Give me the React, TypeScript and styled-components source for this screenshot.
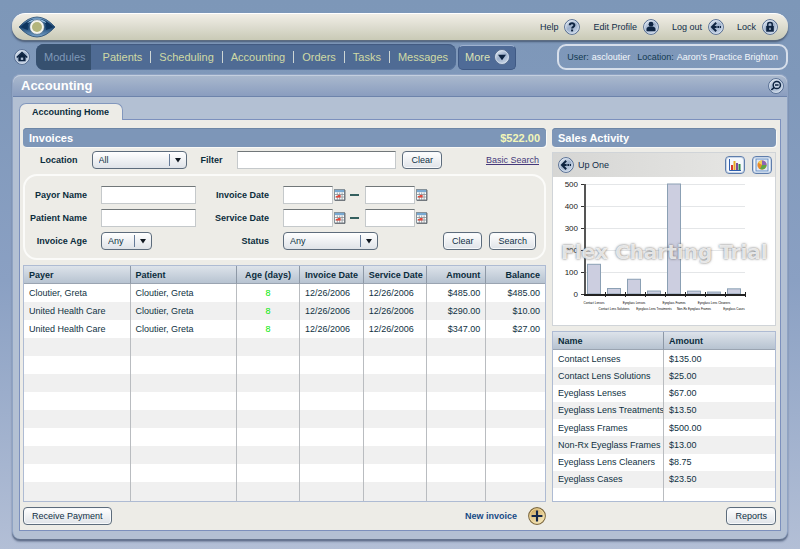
import React from "react";
import styled, { createGlobalStyle } from "styled-components";

const GlobalStyle = createGlobalStyle`
  * { box-sizing: border-box; }
  body {
    margin: 0;
    color: #0f3142;
    font-family: "Liberation Sans", Arial, sans-serif;
    font-size: 9px;
    line-height: 12px;
    background: #b3bfd6;
  }
  button, input, select { font: inherit; color: inherit; margin: 0; }
`;

const Page = styled.div`
  min-height: 100vh;
  padding: 13px 12px 11px;
  background: linear-gradient(#7d97b8 0, #7f98ba 80px, #8aa0c3 280px, #b3bfd6 100%);
`;

const TopBar = styled.header`
  display: flex;
  align-items: center;
  justify-content: space-between;
  height: 27px;
  padding: 0 10px 1px 6px;
  border-top: 1px solid #fff;
  border-radius: 13px;
  background: linear-gradient(#f1eee6, #dddccf 50%, #c9cab6);
  box-shadow: 0 1px 0 #5d6c80, 0 2px 2px #495b76;
`;

const UtilityList = styled.div`
  display: flex;
  align-items: center;
  gap: 13px;
`;

const UtilityButton = styled.button`
  display: flex;
  align-items: center;
  gap: 6px;
  padding: 0;
  border: 0;
  background: none;
  color: #112d48;
`;

const NavRow = styled.div`
  display: flex;
  align-items: center;
  height: 26px;
  margin: 4px 0;
  padding-left: 2px;
`;

const IconButton = styled.button`
  display: flex;
  padding: 0;
  border: 0;
  background: none;
`;

const Nav = styled.nav`
  display: flex;
  align-items: stretch;
  height: 26px;
  margin: 0 2px 0 6px;
  overflow: hidden;
  border-radius: 8px;
  background: #4f6b94;
  box-shadow: inset 0 1px 1px #425a80, inset 0 -1px 0 #5c77a0;
  font-size: 11px;
`;

const ModulesLabel = styled.span`
  display: flex;
  align-items: center;
  padding: 0 5px 1px 8px;
  margin-right: 4px;
  background: #36506f;
  color: #7f98b8;
`;

const NavLink = styled.a`
  display: flex;
  align-items: center;
  color: #cfdaa5;
  text-decoration: none;
  padding: 0 8px 1px;

  & + &::before {
    content: "";
    width: 1px;
    height: 12px;
    margin: 0 8px 0 -8px;
    background: #cdd6d5;
  }
`;

const MoreButton = styled.button`
  display: flex;
  align-items: center;
  gap: 4px;
  height: 25px;
  padding: 0 5px 0 6px;
  border: 1px solid #3f5984;
  border-top-color: #9fb2cf;
  border-radius: 5px;
  background: #4f6b97;
  color: #dbe1b4;
  font-size: 11px;
`;

const UserBox = styled.div`
  display: flex;
  align-items: center;
  gap: 3px;
  height: 26px;
  margin-left: auto;
  padding: 0 8px;
  border: 2px solid #d7dfeb;
  border-radius: 9px;
  color: #12384f;

  b { font-weight: 400; color: #f4f7fb; }
  b + span { margin-left: 4px; }
`;

const Panel = styled.section`
  padding-bottom: 8px;
  border: 1px solid #8fa3c3;
  border-bottom: 0;
  border-radius: 8px;
  background: #b3c0d3;
  box-shadow: 0 2px 1px #65748f, 0 3px 2px #8390aa;
`;

const PanelHeader = styled.header`
  display: flex;
  align-items: center;
  justify-content: space-between;
  height: 22px;
  padding: 0 3px 0 8px;
  border-top: 1px solid #c4cfdf;
  border-bottom: 1px solid #6d83ab;
  border-radius: 8px 8px 0 0;
  background: linear-gradient(#a9b8cd, #8a9dbf);

  h1 {
    margin: 0;
    padding-bottom: 1px;
    color: #fff;
    font-size: 13px;
  }
`;

const TabStrip = styled.div`
  display: flex;
  height: 22px;
  padding: 6px 6px 0;
`;

const Tab = styled.button`
  position: relative;
  height: 17px;
  padding: 0 13px 0 12px;
  border: 1px solid #8297bd;
  border-bottom: 0;
  border-radius: 7px 7px 0 0;
  background: #edece7;
  font-weight: 700;
  color: #0b2c3c;
`;

const Workspace = styled.main`
  display: grid;
  grid-template-columns: 523fr 224fr;
  column-gap: 6px;
  margin: 0 6px;
  padding: 8px 4px 0 3px;
  border: 1px solid #7c90bd;
  background: #edece7;
`;

const Column = styled.div`
  display: flex;
  flex-direction: column;
  min-width: 0;
`;

const SectionTitle = styled.h2`
  display: flex;
  align-items: center;
  justify-content: space-between;
  height: 19px;
  margin: 0;
  padding: 0 6px;
  border-radius: 4px;
  background: #7d96b8;
  box-shadow: inset 0 1px 0 #6d86a6, 1px 1px 0 #f9f9f6;
  color: #fff;
  font-size: 11px;

  strong { color: #f3f6b8; }
`;

const FilterRow = styled.div`
  display: flex;
  align-items: center;
  margin: 4px 0 5px;
  padding: 0 7px 0 17px;
`;

const FieldLabel = styled.label`
  color: #0b2c3c;
  font-weight: 700;
  text-align: right;
`;

const TextInput = styled.input<{ $width?: number }>`
  width: ${(p) => (p.$width ? `${p.$width}px` : "100%")};
  min-width: 0;
  height: 18px;
  padding: 0 4px;
  border: 1px solid #c5c9cb;
  border-top-color: #717779;
  border-radius: 0;
  background: #fff;
`;

const FilterInput = styled(TextInput)`
  flex: 1;
  margin: 0 6px 0 14px;
`;

const Button = styled.button`
  height: 18px;
  padding: 0 8px;
  border: 1px solid #5d6c7c;
  border-radius: 4px;
  background: linear-gradient(#fff, #dfe3e8);
  box-shadow: inset 0 0 0 1px #f7f9fb;
  color: #102f45;
  white-space: nowrap;
`;

const SelectShell = styled.span<{ $width: number }>`
  display: grid;
  align-items: center;
  width: ${(p) => p.$width}px;

  > * { grid-area: 1 / 1; }
  > svg { justify-self: end; pointer-events: none; }
`;

const SelectBox = styled.select<{ $indent: number }>`
  appearance: none;
  width: 100%;
  height: 18px;
  padding: 0 18px 1px ${(p) => p.$indent}px;
  border: 1px solid #5d6c7c;
  border-radius: 4px;
  background: linear-gradient(#fff, #dfe3e8);
`;

const BasicLink = styled.a`
  margin-left: 44px;
  color: #46397a;
  white-space: nowrap;
`;

const SearchBox = styled.form`
  display: grid;
  grid-template-columns: 62px 95px 59px 1fr;
  align-items: center;
  gap: 5px 14px;
  padding: 10px 8px 8px 0;
  border: 2px solid #fbfbf9;
  border-radius: 14px;
`;

const Inline = styled.div`
  display: flex;
  align-items: center;
  gap: 7px;
`;

const DateRange = styled.div`
  display: flex;
  align-items: center;
  gap: 1px;
`;

const Dash = styled.span`
  width: 9px;
  height: 2px;
  margin: 0 5px 0 3px;
  background: #35605f;
`;

const Spacer = styled.span`
  flex: 1;
`;

const Table = styled.table<{ $height: number }>`
  width: 100%;
  height: ${(p) => p.$height}px;
  table-layout: fixed;
  border-collapse: separate;
  border-spacing: 0;
  border: 1px solid #aebbd3;
  background: #fff;

  th, td {
    padding: 0 5px;
    border-right: 1px solid #b9bcc0;
    text-align: left;
    white-space: nowrap;
    overflow: hidden;
  }
  th:last-child, td:last-child { border-right: 0; }
  thead tr { height: 18px; }
  th {
    border-bottom: 1px solid #9aa4b1;
    border-right-color: #8d98a6;
    background: linear-gradient(#dde3ea, #b7c3d1);
    color: #0b2c3c;
  }
  tbody tr:nth-child(even) td { background: #f0f0f0; }
`;

const InvoiceTable = styled(Table)`
  margin-top: 5px;
  tbody tr { height: 18px; }
  tbody tr:last-child { height: auto; }
  th:nth-child(3), td:nth-child(3) { text-align: center; }
  td:nth-child(3) { color: #00e800; }
  th:nth-child(n + 6), td:nth-child(n + 6) { text-align: right; }
`;

const SalesTable = styled(Table)`
  margin-top: 5px;
  td, th { padding-right: 0; }
  tbody tr:last-child { height: 13px; }
`;

const Footer = styled.footer`
  display: flex;
  align-items: center;
  justify-content: space-between;
  height: 28px;
`;

const NewInvoice = styled.button`
  display: flex;
  align-items: center;
  gap: 11px;
  padding: 0;
  border: 0;
  background: none;
  color: #174a86;
  font-weight: 700;
`;

const ChartCard = styled.div`
  position: relative;
  margin-top: 5px;
  border: 1px solid #d0d4d8;
  background: #fff;
`;

const ChartBar = styled.div`
  display: flex;
  align-items: center;
  gap: 7px;
  height: 24px;
  padding: 0 3px 0 5px;
  background: linear-gradient(90deg, #d6d6d4, #e8e8e6);
`;

const UpButton = styled(UtilityButton)`
  gap: 4px;
  margin-right: auto;
`;

const ChartToggle = styled.button`
  display: grid;
  place-items: center;
  width: 20px;
  height: 18px;
  padding: 0;
  border: 1px solid #5e7dab;
  border-radius: 4px;
  background: #f5f8fc;
  box-shadow: inset 0 0 0 1px #c7d5e8;
`;

const ChartSvg = styled.svg`
  display: block;
  width: 100%;
`;

const Watermark = styled.span`
  position: absolute;
  top: 87px;
  left: 8px;
  color: rgba(255, 255, 255, 0.8);
  font: 700 20px/24px "DejaVu Sans", Verdana, sans-serif;
  text-shadow: 0 0 2px rgba(90, 90, 90, 0.7), 0 0 3px rgba(130, 130, 130, 0.5);
  white-space: nowrap;
  pointer-events: none;
`;

function Orb({ size = 16, gold = false, children }: { size?: number; gold?: boolean; children: React.ReactNode }) {
  const id = gold ? "orb-gold" : "orb-blue";
  return (
    <svg width={size} height={size} viewBox="0 0 16 16" aria-hidden="true">
      <defs>
        <linearGradient id={id} x1="0" y1="0" x2="0.6" y2="1">
          <stop offset="0" stopColor={gold ? "#c79c4a" : "#f2f6fb"} />
          <stop offset="0.55" stopColor={gold ? "#e2c88c" : "#9db0cb"} />
          <stop offset="1" stopColor={gold ? "#f6e8be" : "#c5d2e4"} />
        </linearGradient>
      </defs>
      <circle cx="8" cy="8" r="7.4" fill={`url(#${id})`} stroke={gold ? "#7c6840" : "#536b90"} strokeWidth="1" />
      <circle cx="8" cy="8" r="6.4" fill="none" stroke={gold ? "#f1dca4" : "#e3ebf5"} strokeWidth="0.7" />
      {children}
    </svg>
  );
}

const INK = "#0d2340";

const HelpGlyph = () => (
  <g>
    <path d="M5.7 6.3C5.7 3.6 10.4 3.5 10.4 6.3C10.4 7.9 8.1 7.8 8.1 9.6" fill="none" stroke={INK} strokeWidth="2" />
    <rect x="7.1" y="10.5" width="2" height="1.9" fill={INK} />
  </g>
);
const PersonGlyph = () => (
  <g fill={INK}>
    <circle cx="8" cy="5.2" r="2.4" />
    <path d="M3.5 12.2V9.7Q3.5 8 6 7.4H10Q12.5 8 12.5 9.7V12.2Z" />
  </g>
);
const BackGlyph = () => (
  <g fill="none" stroke={INK} strokeWidth="2">
    <path d="M8.2 3.8L4 8L8.2 12.2" />
    <path d="M5 8H8.6M9.4 8H11M11.7 8H13" />
  </g>
);
const LockGlyph = () => (
  <g>
    <rect x="4.2" y="6.9" width="7.6" height="5.8" fill={INK} />
    <path d="M5.8 7V5.2Q5.8 3.6 8 3.6Q10.2 3.6 10.2 5.2V7" fill="none" stroke={INK} strokeWidth="1.5" />
    <path d="M8 8.7V11" stroke="#c7d4e6" strokeWidth="1.2" />
  </g>
);
const HomeGlyph = () => (
  <g>
    <path d="M2.8 8.5L8 3.5L13.2 8.5" fill="none" stroke={INK} strokeWidth="1.6" />
    <path d="M4.4 7.6L8 4.2L11.6 7.6V12.2H4.4Z" fill={INK} />
    <rect x="6.8" y="8.6" width="2.4" height="2.3" fill="#aebed5" />
  </g>
);

function EyeLogo() {
  return (
    <svg width="38" height="22" viewBox="0 0 38 22" role="img" aria-label="Eye logo">
      <defs>
        <linearGradient id="eye-lid" x1="0" y1="0" x2="0" y2="1">
          <stop offset="0" stopColor="#7fa9cf" />
          <stop offset="0.5" stopColor="#17426f" />
          <stop offset="1" stopColor="#7da8cf" />
        </linearGradient>
      </defs>
      <path d="M1 11Q10 1 19 1Q28 1 37 11Q28 21 19 21Q10 21 1 11Z" fill="url(#eye-lid)" stroke="#24496e" strokeWidth="0.8" />
      <path d="M3 11Q10 3 17 3Q8 7 10 14Q6 13 3 11Z" fill="#0e355f" />
      <path d="M35 11Q28 3 21 3Q30 7 28 14Q32 13 35 11Z" fill="#0e355f" />
      <path d="M9 7Q13 3 19 3Q25 3 29 7Q24 5 19 5Q14 5 9 7Z" fill="#9bc2e2" />
      <circle cx="19" cy="11" r="7.4" fill="#f4f4ee" stroke="#3c5f80" strokeWidth="0.7" />
      <circle cx="19" cy="11" r="5" fill="#b3b57c" />
    </svg>
  );
}

const Calendar = () => (
  <svg width="12" height="12" viewBox="0 0 12 12" aria-hidden="true">
    <rect x="0.5" y="0.5" width="10" height="10.5" fill="#fff" stroke="#87929a" />
    <rect x="1" y="1" width="9" height="2.2" fill="#78a9d2" />
    <path d="M1 5.5H10.5M1 8H10.5M3.3 3.5V11M5.7 3.5V11M8.1 3.5V11" stroke="#8a8f94" strokeWidth="0.8" />
    <path d="M4 6H6.6V8.4H2V7H4Z" fill="#e6473a" />
    <path d="M11 1V11.4H1" fill="none" stroke="#555c63" strokeWidth="0.8" />
  </svg>
);

function Select({ id, value, width, indent = 6 }: { id: string; value: string; width: number; indent?: number }) {
  return (
    <SelectShell $width={width}>
      <SelectBox id={id} $indent={indent} defaultValue={value}>
        <option>{value}</option>
      </SelectBox>
      <svg width="18" height="18" viewBox="0 0 18 18" aria-hidden="true">
        <path d="M0.5 3V15" stroke="#667b98" />
        <path d="M6 7H12L9 11.5Z" fill="#101820" />
      </svg>
    </SelectShell>
  );
}

function Dates({ id, name }: { id: string; name: string }) {
  return (
    <DateRange>
      <TextInput id={id} $width={50} />
      <IconButton type="button" aria-label={`${name} from calendar`}><Calendar /></IconButton>
      <Dash />
      <TextInput $width={50} aria-label={`${name} to`} />
      <IconButton type="button" aria-label={`${name} to calendar`}><Calendar /></IconButton>
    </DateRange>
  );
}

const navItems = ["Patients", "Scheduling", "Accounting", "Orders", "Tasks", "Messages"];

const invoiceColumns: [string, number][] = [
  ["Payer", 107], ["Patient", 107], ["Age (days)", 63], ["Invoice Date", 64],
  ["Service Date", 64], ["Amount", 59], ["Balance", 59],
];

const invoices = [
  ["Cloutier, Greta", "Cloutier, Greta", "8", "12/26/2006", "12/26/2006", "$485.00", "$485.00"],
  ["United Health Care", "Cloutier, Greta", "8", "12/26/2006", "12/26/2006", "$290.00", "$10.00"],
  ["United Health Care", "Cloutier, Greta", "8", "12/26/2006", "12/26/2006", "$347.00", "$27.00"],
];

const sales: [string, number][] = [
  ["Contact Lenses", 135], ["Contact Lens Solutions", 25], ["Eyeglass Lenses", 67],
  ["Eyeglass Lens Treatments", 13.5], ["Eyeglass Frames", 500], ["Non-Rx Eyeglass Frames", 13],
  ["Eyeglass Lens Cleaners", 8.75], ["Eyeglass Cases", 23.5],
];

function SalesChart() {
  const base = 117;
  const perUnit = 0.22;
  return (
    <ChartSvg viewBox="0 0 222 148" role="img" aria-label="Sales by product">
      {[500, 400, 300, 200, 100, 0].map((v) => {
        const y = base - v * perUnit;
        return (
          <g key={v}>
            <path d={`M32 ${y + 0.5}H192`} stroke="#e4e6e8" />
            <path d={`M28 ${y + 0.5}H33`} stroke="#333" />
            <text x="25" y={y + 3} textAnchor="end" fontSize="8" fill="#222">{v}</text>
          </g>
        );
      })}
      {sales.map(([name, value], i) => (
        <g key={name}>
          <rect x={34.5 + i * 20} y={base - value * perUnit} width="13" height={value * perUnit} fill="#cccee0" stroke="#8ba0b4" />
          <text x={41 + i * 20} y={i % 2 ? 133 : 127} textAnchor="middle" fontSize="3" fill="#000">{name}</text>
          <path d={`M${52.5 + i * 20} 115V120`} stroke="#222" />
        </g>
      ))}
      <path d="M32 7V118" stroke="#555" strokeWidth="2" />
      <path d="M31 118H192" stroke="#222" strokeWidth="2" />
    </ChartSvg>
  );
}

export default function App() {
  return (
    <Page>
      <GlobalStyle />
      <TopBar>
        <EyeLogo />
        <UtilityList>
          <UtilityButton>Help<Orb><HelpGlyph /></Orb></UtilityButton>
          <UtilityButton>Edit Profile<Orb><PersonGlyph /></Orb></UtilityButton>
          <UtilityButton>Log out<Orb><BackGlyph /></Orb></UtilityButton>
          <UtilityButton>Lock<Orb><LockGlyph /></Orb></UtilityButton>
        </UtilityList>
      </TopBar>

      <NavRow>
        <IconButton aria-label="Home"><Orb><HomeGlyph /></Orb></IconButton>
        <Nav>
          <ModulesLabel>Modules</ModulesLabel>
          {navItems.map((item) => <NavLink key={item} href="#">{item}</NavLink>)}
        </Nav>
        <MoreButton>
          More
          <Orb><path d="M4 5.8H12L8 11.2Z" fill={INK} /></Orb>
        </MoreButton>
        <UserBox>
          <span>User:</span><b>ascloutier</b>
          <span>Location:</span><b>Aaron's Practice Brighton</b>
        </UserBox>
      </NavRow>

      <Panel>
        <PanelHeader>
          <h1>Accounting</h1>
          <IconButton aria-label="Zoom out">
            <Orb>
              <circle cx="8.8" cy="7" r="3.6" fill="#c6d3e5" stroke={INK} strokeWidth="1.5" />
              <path d="M7 7H10.6M6.3 9.4L3.3 12" stroke={INK} strokeWidth="1.6" />
            </Orb>
          </IconButton>
        </PanelHeader>
        <TabStrip><Tab>Accounting Home</Tab></TabStrip>

        <Workspace>
          <Column>
            <SectionTitle>Invoices<strong>$522.00</strong></SectionTitle>
            <FilterRow>
              <Inline>
                <FieldLabel htmlFor="location">Location</FieldLabel>
                <Spacer />
                <Select id="location" value="All" width={95} />
                <Spacer />
                <FieldLabel htmlFor="filter">Filter</FieldLabel>
              </Inline>
              <FilterInput id="filter" />
              <Button>Clear</Button>
              <BasicLink href="#">Basic Search</BasicLink>
            </FilterRow>

            <SearchBox onSubmit={(e) => e.preventDefault()}>
              <FieldLabel htmlFor="payor">Payor Name</FieldLabel>
              <TextInput id="payor" />
              <FieldLabel htmlFor="invoice-date">Invoice Date</FieldLabel>
              <Dates id="invoice-date" name="Invoice date" />

              <FieldLabel htmlFor="patient">Patient Name</FieldLabel>
              <TextInput id="patient" />
              <FieldLabel htmlFor="service-date">Service Date</FieldLabel>
              <Dates id="service-date" name="Service date" />

              <FieldLabel htmlFor="age">Invoice Age</FieldLabel>
              <Select id="age" value="Any" width={51} />
              <FieldLabel htmlFor="status">Status</FieldLabel>
              <Inline>
                <Select id="status" value="Any" width={95} />
                <Spacer />
                <Button type="reset">Clear</Button>
                <Button type="submit">Search</Button>
              </Inline>
            </SearchBox>

            <InvoiceTable $height={237}>
              <colgroup>
                {invoiceColumns.map(([name, w]) => <col key={name} width={`${(w / 523) * 100}%`} />)}
              </colgroup>
              <thead>
                <tr>{invoiceColumns.map(([name]) => <th key={name} scope="col">{name}</th>)}</tr>
              </thead>
              <tbody>
                {Array.from({ length: 12 }, (_, r) => (
                  <tr key={r}>
                    {invoiceColumns.map(([name], c) => <td key={name}>{invoices[r]?.[c]}</td>)}
                  </tr>
                ))}
              </tbody>
            </InvoiceTable>

            <Footer>
              <Button>Receive Payment</Button>
              <NewInvoice>
                New invoice
                <Orb size={18} gold><path d="M8 3.2V12.8M3.2 8H12.8" stroke="#14284a" strokeWidth="1.9" /></Orb>
              </NewInvoice>
            </Footer>
          </Column>

          <Column>
            <SectionTitle>Sales Activity</SectionTitle>
            <ChartCard>
              <ChartBar>
                <UpButton><Orb><BackGlyph /></Orb>Up One</UpButton>
                <ChartToggle aria-label="Bar chart">
                  <svg width="14" height="12" viewBox="0 0 14 12" aria-hidden="true">
                    <path d="M1.5 0V11.5H13" fill="none" stroke="#2f5fae" />
                    <rect x="3" y="6" width="2" height="5" fill="#d8392e" />
                    <rect x="5.5" y="2" width="2" height="9" fill="#e7a823" />
                    <rect x="8" y="4" width="2" height="7" fill="#7a4a9e" />
                    <rect x="10.5" y="5" width="2" height="6" fill="#2e8a45" />
                  </svg>
                </ChartToggle>
                <ChartToggle aria-label="Pie chart">
                  <svg width="14" height="14" viewBox="0 0 14 14" aria-hidden="true">
                    <rect x="1" y="1" width="12" height="12" fill="#dfe9f6" stroke="#6b91c6" />
                    <circle cx="7" cy="7" r="4.6" fill="#e98a2b" />
                    <path d="M7 7V2.4A4.6 4.6 0 0 1 11.6 7Z" fill="#8d64b5" />
                    <path d="M7 7H11.6A4.6 4.6 0 0 1 5 11.1Z" fill="#5fa647" />
                    <path d="M7 7L3 4.6A4.6 4.6 0 0 1 7 2.4Z" fill="#f3cf57" />
                  </svg>
                </ChartToggle>
              </ChartBar>
              <SalesChart />
              <Watermark>Flex Charting Trial</Watermark>
            </ChartCard>

            <SalesTable $height={171}>
              <thead>
                <tr><th scope="col">Name</th><th scope="col">Amount</th></tr>
              </thead>
              <tbody>
                {sales.map(([name, value]) => (
                  <tr key={name}><td>{name}</td><td>${value.toFixed(2)}</td></tr>
                ))}
                <tr><td /><td /></tr>
              </tbody>
            </SalesTable>

            <Footer>
              <Spacer />
              <Button>Reports</Button>
            </Footer>
          </Column>
        </Workspace>
      </Panel>
    </Page>
  );
}
